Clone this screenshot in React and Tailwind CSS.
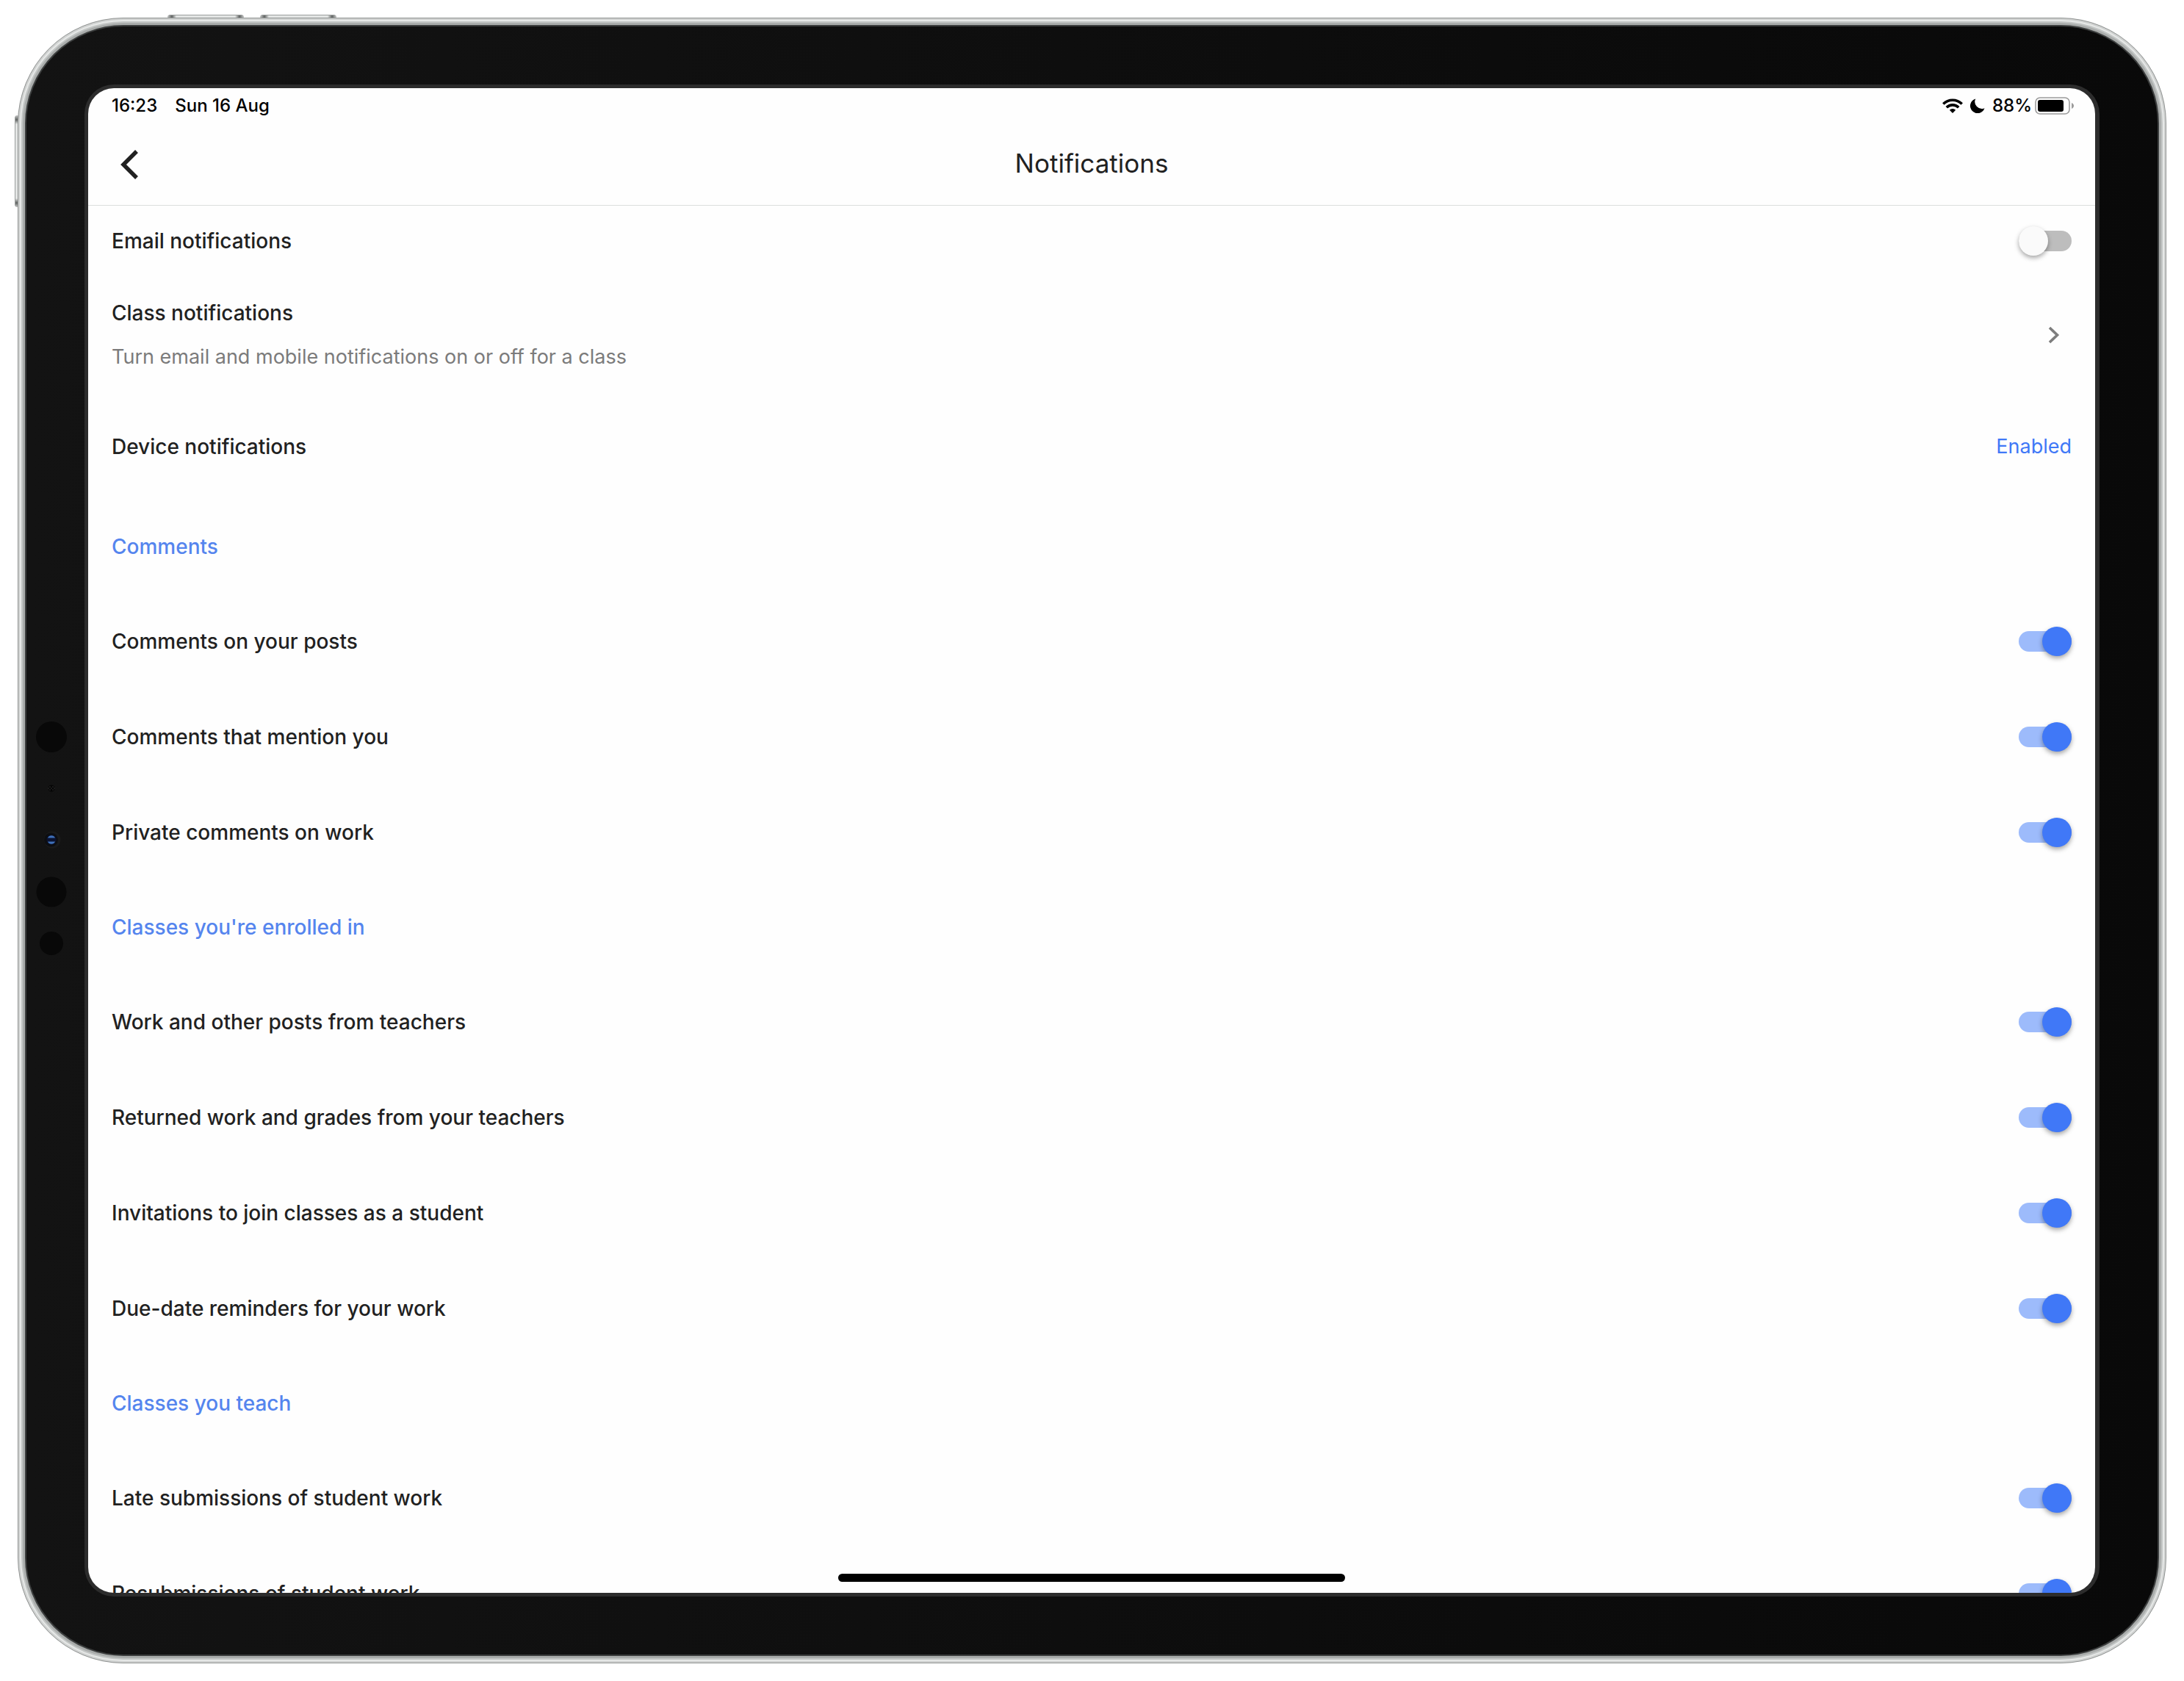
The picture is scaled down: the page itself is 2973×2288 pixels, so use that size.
import React from "react";

const labelText = "text-[28px] leading-[34px] font-medium text-[#212121]";

function Toggle({ id, on }) {
  return (
    <span className="relative flex h-10 w-[72px] shrink-0 items-center">
      <input
        id={id}
        type="checkbox"
        role="switch"
        defaultChecked={on}
        className="peer h-7 w-[72px] cursor-pointer appearance-none rounded-full bg-[#bdbdbd] checked:bg-[#9dbbfb]"
      />
      <span className="pointer-events-none absolute left-0 size-10 rounded-full bg-[#fafafa] shadow-[0_3px_6px_rgba(0,0,0,0.35)] peer-checked:left-8 peer-checked:bg-[#4078f7]" />
    </span>
  );
}

function Row({ id, label, on = true, className = "h-[130px]" }) {
  return (
    <li className={`flex shrink-0 items-center justify-between px-8 ${className}`}>
      <label htmlFor={id} className={labelText}>{label}</label>
      <Toggle id={id} on={on} />
    </li>
  );
}

function Section({ title, rows, id }) {
  return (
    <section className="shrink-0">
      <h2 className="flex h-[128px] items-center px-8 text-[28px] leading-[34px] font-medium text-[#5585ee]">
        {title}
      </h2>
      <ul>
        {rows.map((r, i) => (
          <Row key={r} id={`${id}-${i}`} label={r} />
        ))}
      </ul>
    </section>
  );
}

function Sensors() {
  return (
    <svg viewBox="0 0 44 324" className="h-[324px] w-11" aria-hidden="true">
      <circle cx="22" cy="23" r="21" fill="#080808" />
      <g fill="#050505">
        <circle cx="22" cy="93" r="4.500" />
      </g>
      <g fill="#222">
        <circle cx="20" cy="91" r="1" /><circle cx="24" cy="91" r="1" />
        <circle cx="18" cy="93" r="1" /><circle cx="22" cy="93" r="1" /><circle cx="26" cy="93" r="1" />
        <circle cx="20" cy="95" r="1" /><circle cx="24" cy="95" r="1" />
      </g>
      <circle cx="23" cy="163" r="11.500" fill="#1a1a1a" />
      <circle cx="21.500" cy="163" r="9.500" fill="#0d0e11" />
      <circle cx="22" cy="163" r="6.500" fill="#0a1230" />
      <path d="M17 160.500a5.500 5.500 0 0 1 10 0zM17 165.500a5.500 5.500 0 0 0 10 0z" fill="#3f70b8" />
      <circle cx="22" cy="234" r="20.500" fill="#080808" />
      <circle cx="22" cy="304" r="16" fill="#080808" />
    </svg>
  );
}

export default function App() {
  return (
    <div className="relative flex h-screen w-full bg-white p-6 font-[Inter,'Liberation_Sans',sans-serif]">
      <span className="absolute top-5 left-[228px] h-3 w-[104px] rounded-t-sm border-t border-[#9b9e9d] bg-[linear-gradient(90deg,#c9cbca_0,#5f6261_6px,#e4e6e5_12px,#e4e6e5_92px,#5f6261_98px,#c9cbca_104px)]" />
      <span className="absolute top-5 left-[354px] h-3 w-[104px] rounded-t-sm border-t border-[#9b9e9d] bg-[linear-gradient(90deg,#c9cbca_0,#5f6261_6px,#e4e6e5_12px,#e4e6e5_92px,#5f6261_98px,#c9cbca_104px)]" />
      <span className="absolute top-[157px] left-5 h-[125px] w-3 rounded-l-sm border-l border-[#9b9e9d] bg-[linear-gradient(180deg,#c9cbca_0,#5f6261_6px,#e4e6e5_12px,#e4e6e5_113px,#5f6261_119px,#c9cbca_125px)]" />

      <div className="relative flex min-w-0 flex-1 rounded-[144px] border border-[#929594] bg-[#a9acab] p-[9px] shadow-[inset_0_0_0_2px_#cfd1d0,inset_0_0_0_4px_#e6e8e7,inset_0_0_0_6px_#c3c6c5]">
        <div className="relative flex min-w-0 flex-1 rounded-[134px] border-2 border-[#3c3e3e] bg-linear-to-r from-[#131313] to-[#090909] p-[79px]">
          <div className="absolute top-[944px] left-3">
            <Sensors />
          </div>
          <main className="relative flex min-w-0 flex-1 flex-col overflow-hidden rounded-[40px] border-[5px] border-r-[6px] border-[#2c2c2c] bg-[#fefefe]">
            <div className="flex h-12 shrink-0 items-center justify-between pr-7 pl-8 text-2xl font-medium text-black">
              <div className="flex gap-6">
                <span>16:23</span>
                <span>Sun 16 Aug</span>
              </div>
              <div className="flex items-center gap-[10px]">
                <svg viewBox="0 0 28 20" className="h-5 w-7" aria-label="Wi-Fi">
                  <g fill="none" stroke="#000" strokeWidth="3.600">
                    <path d="M1.300 7.500a18 18 0 0 1 25.400 0" />
                    <path d="M5.800 12.300a11.600 11.600 0 0 1 16.400 0" />
                  </g>
                  <path d="M14 20l-4.200-4.200a6 6 0 0 1 8.400 0z" />
                </svg>
                <svg viewBox="0 0 20 20" className="size-5" aria-label="Do not disturb">
                  <path d="M7.300.5A10 10 0 1 0 19.500 13.200 9.400 9.400 0 0 1 7.300.5z" />
                </svg>
                <div className="flex items-center gap-1">
                  <span>88%</span>
                  <svg viewBox="0 0 54 24" className="h-6 w-[54px]" aria-label="Battery">
                    <rect x="1" y="1" width="46" height="22" rx="6" fill="none" stroke="#9b9b9b" strokeWidth="1.600" />
                    <rect x="4" y="4" width="35" height="16" rx="3" />
                    <path d="M50 8c4 1.500 4 6.500 0 8z" fill="#9b9b9b" />
                  </svg>
                </div>
              </div>
            </div>

            <header className="grid h-28 shrink-0 grid-cols-[1fr_auto_1fr] items-center border-b border-[#dcdedd] px-8">
              <button type="button" aria-label="Back" className="flex size-12 items-center justify-center">
                <svg viewBox="0 0 24 40" className="h-10 w-6" fill="none" stroke="#212121" strokeWidth="5.500">
                  <path d="M22 2 4 20l18 18" />
                </svg>
              </button>
              <h1 className="pb-1 text-[35px] leading-[44px] text-[#212121]">Notifications</h1>
            </header>

            <ul className="shrink-0">
              <Row id="email" label="Email notifications" on={false} className="h-24" />
              <li>
                <button type="button" className="flex h-[160px] w-full items-center justify-between pr-12 pl-8 text-left">
                  <span className="flex flex-col gap-[26px]">
                    <span className={labelText}>Class notifications</span>
                    <span className="text-[27px] leading-[34px] text-[#7b7b7b]">Turn email and mobile notifications on or off for a class</span>
                  </span>
                  <svg viewBox="0 0 16 24" className="h-6 w-4" fill="none" stroke="#7d7d7d" strokeWidth="3.600">
                    <path d="M2 2l10.500 10L2 22" />
                  </svg>
                </button>
              </li>
              <li className="flex h-[144px] items-center justify-between px-8">
                <span className={labelText}>Device notifications</span>
                <a href="#device" className="text-[27px] leading-[34px] text-[#4078f7]">Enabled</a>
              </li>
            </ul>

            <Section id="comments" title="Comments" rows={["Comments on your posts", "Comments that mention you", "Private comments on work"]} />
            <Section id="enrolled" title="Classes you're enrolled in" rows={["Work and other posts from teachers", "Returned work and grades from your teachers", "Invitations to join classes as a student", "Due-date reminders for your work"]} />
            <Section id="teach" title="Classes you teach" rows={["Late submissions of student work", "Resubmissions of student work"]} />

            <span className="absolute bottom-[15px] left-1/2 h-[11px] w-[690px] -translate-x-1/2 rounded-full bg-black" />
          </main>
        </div>
      </div>
    </div>
  );
}
